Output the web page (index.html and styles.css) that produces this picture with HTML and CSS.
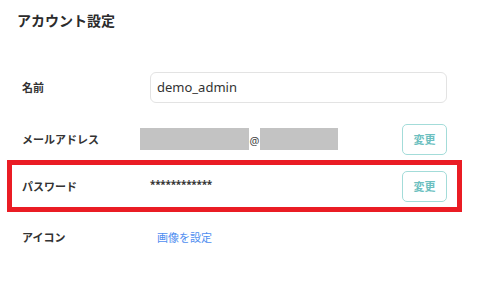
FILE: index.html
```html
<!DOCTYPE html>
<html lang="ja">
<head>
<meta charset="utf-8">
<link rel="stylesheet" href="styles.css">
</head>
<body>
<div class="page">
  <h1 class="title">アカウント設定</h1>
  <div class="rows">
    <div class="row">
      <div class="label">名前</div>
      <div class="value"><input class="input" type="text" value="demo_admin"></div>
    </div>
    <div class="row row-email">
      <div class="label">メールアドレス</div>
      <div class="value">
        <span class="redact redact-user"></span><span class="at">@</span><span class="redact redact-domain"></span>
      </div>
      <button class="btn">変更</button>
    </div>
    <div class="row row-highlight">
      <div class="label">パスワード</div>
      <div class="value"><span class="mask">************</span></div>
      <button class="btn">変更</button>
    </div>
    <div class="row row-icon">
      <div class="label">アイコン</div>
      <div class="value"><a class="link" href="#">画像を設定</a></div>
    </div>
  </div>
</div>
</body>
</html>
```

FILE: styles.css
```css
* { box-sizing: border-box; }
html, body { margin: 0; padding: 0; background: #fff; }
body {
  font-family: "Noto Sans", "Noto Sans CJK JP", sans-serif;
  color: #333;
  width: 494px;
  height: 286px;
  overflow: hidden;
}
.page {
  padding: 9px 37px 0 12px;
}
.title {
  margin: 0 0 0 5px;
  font-size: 14px;
  line-height: 22px;
  font-weight: 700;
  color: #2b2b2b;
  font-family: "Noto Sans CJK JP", sans-serif;
}
.rows {
  margin-top: 35px;
  display: flex;
  flex-direction: column;
}
.row {
  display: flex;
  align-items: center;
  height: 42px;
  padding: 0 10px;
}
.row-email { margin-top: 10px; }
.row-highlight { margin-top: 5px; outline: 5px solid #ea1c24; }
.row-icon { margin-top: 9px; }
.label {
  width: 128px;
  flex: none;
  font-size: 11px;
  font-weight: 700;
  color: #333;
  font-family: "Noto Sans CJK JP", sans-serif;
}
.value {
  flex: 1;
  display: flex;
  align-items: center;
  min-width: 0;
}
.input {
  width: 298px;
  height: 31px;
  border: 1px solid #e3e3e3;
  border-radius: 6px;
  padding: 0 6px;
  font-family: "Noto Sans", sans-serif;
  font-size: 13px;
  color: #333;
  outline: none;
  background: #fff;
}
.redact {
  display: inline-block;
  height: 22px;
  background: #c3c3c3;
}
.redact-user { width: 109px; margin-left: -10px; }
.redact-domain { width: 78px; }
.at {
  font-size: 11px;
  width: 11px;
  text-align: center;
  color: #444;
  line-height: 22px;
  position: relative;
  top: 2px;
}
.mask {
  font-size: 10px;
  font-weight: 700;
  letter-spacing: -0.25px;
  color: #333;
  position: relative;
  top: -2px;
}
.btn {
  flex: none;
  width: 45px;
  height: 31px;
  border: 1.5px solid #a3dcd9;
  border-radius: 5px;
  background: #fff;
  color: #6cbfbf;
  font-family: "Noto Sans CJK JP", sans-serif;
  font-size: 11px;
  font-weight: 700;
  padding: 0;
}
.link {
  margin-left: 7px;
  font-size: 11px;
  color: #4f8ef0;
  text-decoration: none;
  font-family: "Noto Sans CJK JP", sans-serif;
}
```
